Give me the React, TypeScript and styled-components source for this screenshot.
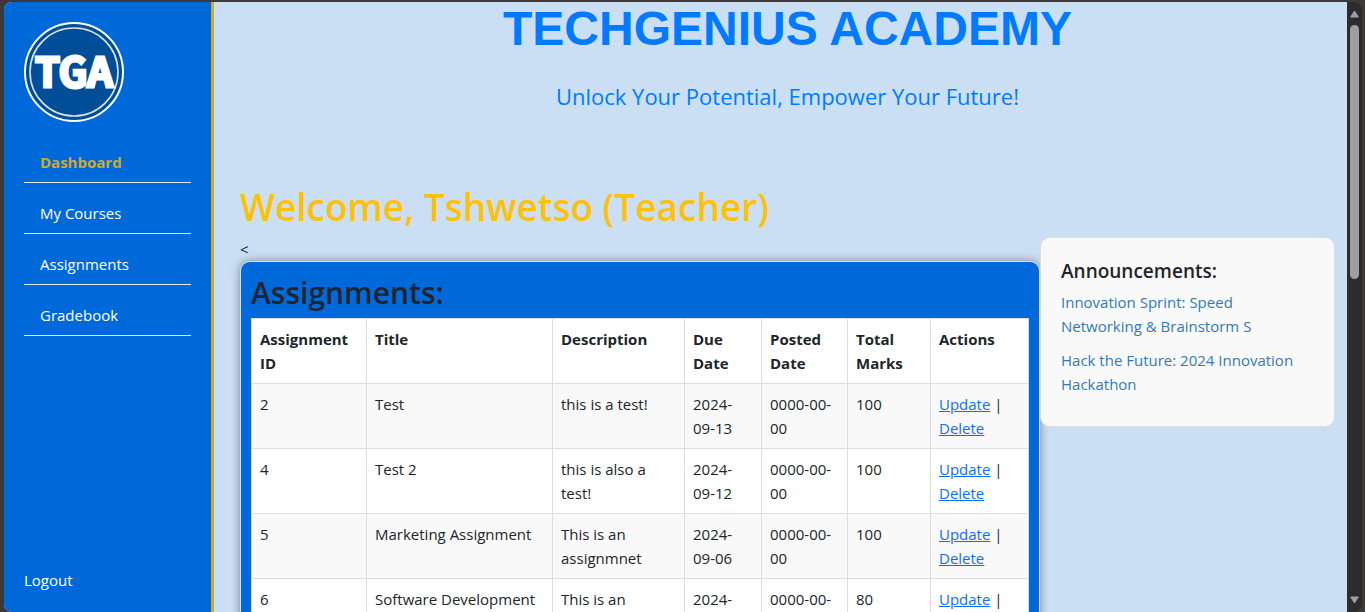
import React from "react";
import styled, { createGlobalStyle } from "styled-components";

const GlobalStyle = createGlobalStyle`
  *, *::before, *::after { box-sizing: border-box; }
  body {
    margin: 0;
    background: #3b3a38;
    color: #212529;
    font: 400 15px/24px "Segoe UI", "Open Sans", sans-serif;
  }
  h1, h2, h3, p { margin: 0; }
`;

const Frame = styled.div`
  display: flex;
  height: 100vh;
  padding: 2px 3px 0 4px;
  overflow: hidden;
`;

const Page = styled.div`
  display: flex;
  flex: 1;
  min-width: 0;
  overflow: hidden;
  background: #cbdff4;
  border-radius: 8px 0 0 8px;
`;

const Sidebar = styled.aside`
  display: flex;
  flex-direction: column;
  flex: 0 0 210px;
  padding: 20px;
  background: #0069d9;
  border-right: 3px solid #cdaa2d;
`;

const LogoMark = styled.svg`
  display: block;
  width: 100px;
  height: 100px;
  margin-bottom: 20px;
`;

const LogoText = styled.text`
  font: 700 40px "Noto Sans CJK SC", sans-serif;
  fill: #fff;
  stroke: #fff;
  stroke-width: 3px;
`;

const Nav = styled.nav`
  display: flex;
  flex-direction: column;
  gap: 10px;
`;

const NavLink = styled.a<{ $active?: boolean }>`
  padding: 8px 16px;
  border-bottom: 1px solid #e3ebf2;
  color: ${(p) => (p.$active ? "#cdaa2d" : "#fff")};
  font-weight: ${(p) => (p.$active ? 700 : 400)};
  text-decoration: none;
`;

const Logout = styled.a`
  margin-top: auto;
  color: #fff;
  text-decoration: none;
`;

const Main = styled.main`
  flex: 1;
  min-width: 0;
  padding: 0 12px 0 26px;
`;

const Header = styled.header`
  display: flex;
  flex-direction: column;
  gap: 26px;
  align-items: center;
  padding-bottom: 72px;
  color: #007bff;
  text-align: center;
`;

const Title = styled.h1`
  font: 700 48px/54px Arial, "Liberation Sans", sans-serif;
`;

const Tagline = styled.p`
  font-size: 22px;
  line-height: 28px;
`;

const Welcome = styled.h1`
  padding-bottom: 5px;
  color: #ffc107;
  font-weight: 600;
  font-size: 37px;
  line-height: 50px;
`;

const Columns = styled.div`
  display: grid;
  grid-template-columns: minmax(0, 1fr) 295px;
  align-items: start;
`;

const Card = styled.section`
  padding: 10px;
  background: #0069d9;
  border: 1px solid #ddd;
  border-radius: 10px;
  box-shadow: 0 0 10px rgba(0, 0, 0, 0.4);
`;

const CardTitle = styled.h2`
  padding-bottom: 5px;
  font-weight: 600;
  font-size: 30px;
  line-height: 41px;
`;

const Table = styled.table`
  width: 100%;
  table-layout: fixed;
  border-collapse: collapse;
  background: #fff;

  tbody tr:nth-child(odd) {
    background: #f9f9f9;
  }
`;

const Col = styled.col<{ $width: number }>`
  width: ${(p) => p.$width}px;
`;

const HeadCell = styled.th`
  padding: 8px;
  border: 1px solid #ddd;
  font-weight: 700;
  text-align: left;
  vertical-align: top;
`;

const Cell = styled.td`
  padding: 8px;
  border: 1px solid #ddd;
  vertical-align: top;
`;

const ActionLink = styled.a`
  color: #0d6efd;
`;

const Announcements = styled.aside`
  position: relative;
  padding: 20px;
  background: #f9f9f9;
  border: 1px solid #ddd;
  border-radius: 10px;
`;

const AnnouncementsTitle = styled.h3`
  padding-bottom: 6px;
  font-weight: 600;
  font-size: 19px;
  line-height: 26px;
`;

const AnnouncementList = styled.ul`
  margin: 0;
  padding: 0;
  list-style: none;
`;

const Announcement = styled.li`
  padding-bottom: 10px;
`;

const AnnouncementLink = styled.a`
  color: #337ab7;
  text-decoration: none;
`;

const ScrollTrack = styled.div`
  display: flex;
  flex: 0 0 15px;
  flex-direction: column;
  align-items: center;
  padding: 8px 0;
  background: #2c2c2c;
  border-radius: 0 8px 8px 0;
`;

const ScrollThumb = styled.div`
  flex: 0 0 254px;
  width: 9px;
  margin: 7px 0 auto;
  background: #9f9f9f;
  border-radius: 5px;
`;

const Arrow = ({ d }: { d: string }) => (
  <svg width="9" height="8" viewBox="0 0 9 8" aria-hidden="true">
    <path d={d} fill="#9f9f9f" stroke="#9f9f9f" strokeLinejoin="round" />
  </svg>
);

const Logo = () => (
  <LogoMark viewBox="0 0 100 100" role="img" aria-label="TGA">
    <circle cx="50" cy="50" r="49" fill="#004e98" stroke="#fff" strokeWidth="2" />
    <circle cx="50" cy="50" r="44" fill="none" stroke="#d5e2ef" strokeWidth="1.6" />
    <LogoText x="50" y="65" textAnchor="middle">TGA</LogoText>
  </LogoMark>
);

const navItems = ["Dashboard", "My Courses", "Assignments", "Gradebook"];

const columns = [
  { label: "Assignment ID", width: 115 },
  { label: "Title", width: 186 },
  { label: "Description", width: 132 },
  { label: "Due Date", width: 77 },
  { label: "Posted Date", width: 86 },
  { label: "Total Marks", width: 83 },
  { label: "Actions", width: 98 },
];

const assignments = [
  { id: 2, title: "Test", description: "this is a test!", due: "2024-09-13", posted: "0000-00-00", marks: 100 },
  { id: 4, title: "Test 2", description: "this is also a test!", due: "2024-09-12", posted: "0000-00-00", marks: 100 },
  { id: 5, title: "Marketing Assignment", description: "This is an assignmnet", due: "2024-09-06", posted: "0000-00-00", marks: 100 },
  { id: 6, title: "Software Development", description: "This is an assignment", due: "2024-09-06", posted: "0000-00-00", marks: 80 },
];

const announcements = [
  "Innovation Sprint: Speed Networking & Brainstorm S",
  "Hack the Future: 2024 Innovation Hackathon",
];

export default function App() {
  return (
    <>
      <GlobalStyle />
      <Frame>
        <Page>
          <Sidebar>
            <Logo />
            <Nav>
              {navItems.map((item, i) => (
                <NavLink key={item} href="#" $active={i === 0}>{item}</NavLink>
              ))}
            </Nav>
            <Logout href="#">Logout</Logout>
          </Sidebar>
          <Main>
            <Header>
              <Title>TECHGENIUS ACADEMY</Title>
              <Tagline>Unlock Your Potential, Empower Your Future!</Tagline>
            </Header>
            <Welcome>Welcome, Tshwetso (Teacher)</Welcome>
            <Columns>
              <div>
                <p>&lt;</p>
                <Card>
                  <CardTitle>Assignments:</CardTitle>
                  <Table>
                    <colgroup>
                      {columns.map((c) => <Col key={c.label} $width={c.width} />)}
                    </colgroup>
                    <thead>
                      <tr>
                        {columns.map((c) => <HeadCell key={c.label} scope="col">{c.label}</HeadCell>)}
                      </tr>
                    </thead>
                    <tbody>
                      {assignments.map((a) => (
                        <tr key={a.id}>
                          <Cell>{a.id}</Cell>
                          <Cell>{a.title}</Cell>
                          <Cell>{a.description}</Cell>
                          <Cell>{a.due}</Cell>
                          <Cell>{a.posted}</Cell>
                          <Cell>{a.marks}</Cell>
                          <Cell>
                            <ActionLink href="#">Update</ActionLink> | <ActionLink href="#">Delete</ActionLink>
                          </Cell>
                        </tr>
                      ))}
                    </tbody>
                  </Table>
                </Card>
              </div>
              <Announcements>
                <AnnouncementsTitle>Announcements:</AnnouncementsTitle>
                <AnnouncementList>
                  {announcements.map((text) => (
                    <Announcement key={text}>
                      <AnnouncementLink href="#">{text}</AnnouncementLink>
                    </Announcement>
                  ))}
                </AnnouncementList>
              </Announcements>
            </Columns>
          </Main>
        </Page>
        <ScrollTrack>
          <Arrow d="M4.5 1 8.3 7H.7Z" />
          <ScrollThumb />
          <Arrow d="M.7 1H8.3L4.5 7Z" />
        </ScrollTrack>
      </Frame>
    </>
  );
}
